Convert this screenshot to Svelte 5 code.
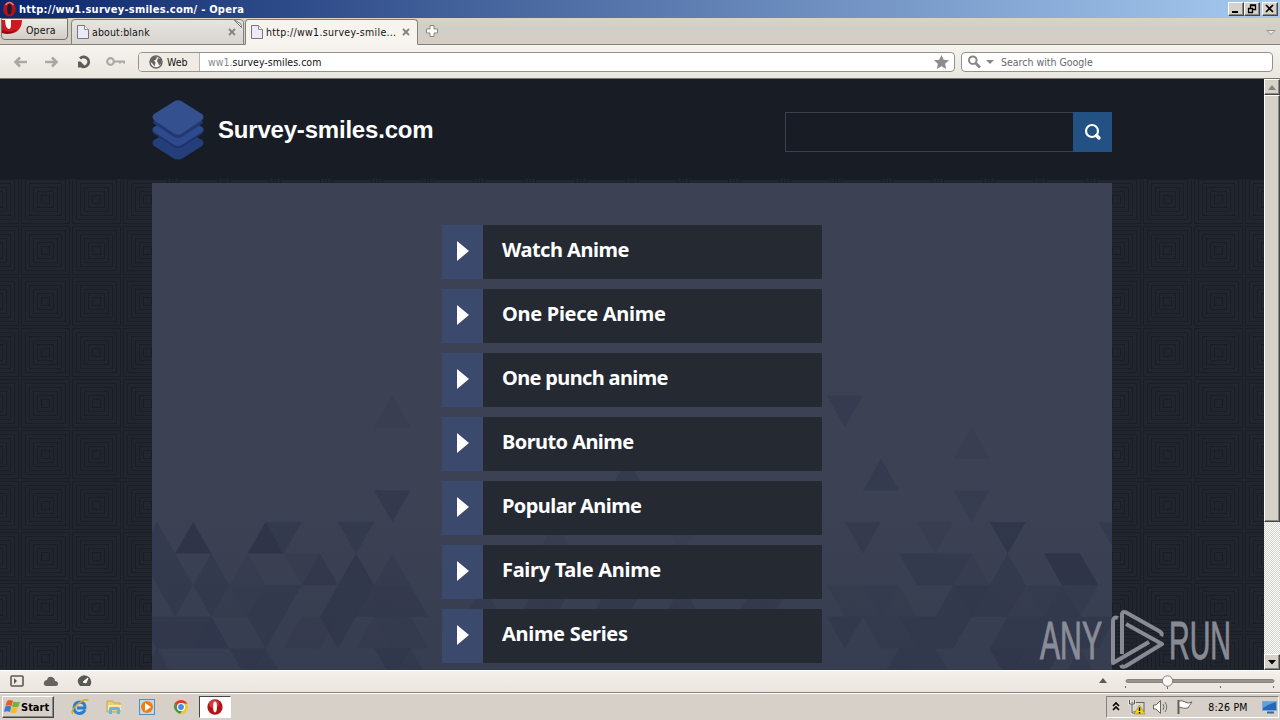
<script lang="ts">
    const links = [
        { label: 'Watch Anime', spacing: -0.5 },
        { label: 'One Piece Anime', spacing: -0.3 },
        { label: 'One punch anime', spacing: -0.65 },
        { label: 'Boruto Anime', spacing: -0.57 },
        { label: 'Popular Anime', spacing: -0.57 },
        { label: 'Fairy Tale Anime', spacing: -0.3 },
        { label: 'Anime Series', spacing: -0.3 }
    ];

    // column, row, direction, opacity
    const triangles: [number, number, string, number][] = [
        [13, -4, 'up', 0.25], [38, -4, 'down', 0.4], [45, -3, 'up', 0.25], [40, -2, 'up', 0.5],
        [26, -2, 'up', 0.5], [13, -1, 'down', 0.55], [45, -1, 'down', 0.3],
        [0, 0, 'up', 0.4], [2, 0, 'up', 0.85], [6, 0, 'up', 0.85], [7, 0, 'down', 0.5],
        [11, 0, 'down', 0.5], [39, 0, 'down', 0.45], [43, 0, 'down', 0.2], [47, 0, 'down', 0.7],
        [53, 0, 'down', 0.4], [22, 0, 'up', 0.2], [29, 0, 'down', 0.15],
        [0, 1, 'down', 0.4], [1, 1, 'up', 0.45], [3, 1, 'up', 0.5], [5, 1, 'up', 0.25],
        [8, 1, 'down', 0.2], [9, 1, 'up', 0.6], [11, 1, 'up', 0.65], [13, 1, 'up', 0.3],
        [26, 1, 'up', 0.4], [31, 1, 'down', 0.3], [42, 1, 'down', 0.5], [43, 1, 'up', 0.5],
        [44, 1, 'down', 0.4], [45, 1, 'up', 0.2], [47, 1, 'up', 0.5], [50, 1, 'down', 0.85],
        [51, 1, 'up', 0.85],
        [1, 2, 'down', 0.5], [3, 2, 'down', 0.5], [4, 2, 'up', 0.25], [5, 2, 'down', 0.3],
        [6, 2, 'up', 0.5], [7, 2, 'down', 0.5], [10, 2, 'up', 0.6], [11, 2, 'down', 0.6],
        [12, 2, 'up', 0.45], [13, 2, 'down', 0.4], [14, 2, 'up', 0.4], [18, 2, 'up', 0.3],
        [21, 2, 'up', 0.4], [22, 2, 'down', 0.4], [25, 2, 'up', 0.5], [26, 2, 'down', 0.5],
        [29, 2, 'up', 0.4], [33, 2, 'up', 0.4], [34, 2, 'down', 0.4], [38, 2, 'down', 0.2],
        [39, 2, 'up', 0.2], [40, 2, 'down', 0.3], [41, 2, 'up', 0.25], [44, 2, 'up', 0.5],
        [45, 2, 'down', 0.6], [46, 2, 'up', 0.5], [47, 2, 'down', 0.45], [48, 2, 'up', 0.25],
        [49, 2, 'down', 0.3], [50, 2, 'up', 0.5], [51, 2, 'down', 0.3],
        [0, 3, 'down', 0.6], [1, 3, 'up', 0.6], [2, 3, 'down', 0.6], [3, 3, 'up', 0.7],
        [6, 3, 'down', 0.5], [8, 3, 'up', 0.25], [9, 3, 'down', 0.25], [10, 3, 'down', 0.6],
        [12, 3, 'up', 0.25], [13, 3, 'down', 0.3], [14, 3, 'up', 0.3], [38, 3, 'down', 0.45],
        [40, 3, 'down', 0.3], [41, 3, 'up', 0.35], [42, 3, 'down', 0.5], [43, 3, 'up', 0.5],
        [44, 3, 'down', 0.45], [47, 3, 'up', 0.4], [48, 3, 'down', 0.4], [49, 3, 'up', 0.4],
        [50, 3, 'down', 0.4], [51, 3, 'up', 0.4], [52, 3, 'down', 0.4],
        [0, 4, 'up', 0.4], [5, 4, 'down', 0.6], [6, 4, 'up', 0.5], [13, 4, 'down', 0.55],
        [14, 4, 'up', 0.3], [41, 4, 'up', 0.5], [42, 4, 'down', 0.4], [43, 4, 'up', 0.4],
        [47, 4, 'down', 0.65], [48, 4, 'up', 0.6], [49, 4, 'down', 0.6], [51, 4, 'up', 0.3]
    ];

    function points(col: number, row: number, dir: string) {
        const x = 5 + col * 18.1;
        const top = 339 + row * 31.6;
        const bottom = top + 31.6;
        return dir === 'up'
            ? `${x},${top} ${x - 18.1},${bottom} ${x + 18.1},${bottom}`
            : `${x},${bottom} ${x - 18.1},${top} ${x + 18.1},${top}`;
    }
</script>

{#snippet operaIcon(size: number)}
    <svg width={size} height={size} viewBox="0 0 16 16">
        <ellipse cx="8" cy="8" rx="7.6" ry="7.8" fill="#b51217" />
        <ellipse cx="7" cy="5" rx="5" ry="4" fill="#ea6961" opacity=".5" />
        <ellipse cx="8" cy="8" rx="1.9" ry="5.4" fill="#fff" />
    </svg>
{/snippet}

{#snippet pageIcon()}
    <svg width="12" height="14" viewBox="0 0 12 14">
        <path d="M.5 .5H7.5L11.5 4.5V13.5H.5Z" fill="#eceaf6" stroke="#777581" />
        <path d="M7.5 .5V4.5H11.5" fill="#fff" stroke="#8d8b96" />
    </svg>
{/snippet}

{#snippet closeIcon()}
    <svg width="8" height="8" viewBox="0 0 8 8">
        <path d="M1 1L7 7M7 1L1 7" stroke="#858380" stroke-width="1.8" />
    </svg>
{/snippet}

<div class="screen">
    <header class="titlebar">
        <span class="title-icon">
            <svg width="13" height="16" viewBox="0 0 13 16">
                <ellipse cx="6.500" cy="8" rx="6.3" ry="7.6" fill="#b51116" />
                <path d="M2.500 4Q6.500 -1 10.500 4" stroke="#f17a72" stroke-width="1.5" fill="none" />
                <ellipse cx="6.500" cy="8" rx="2.3" ry="5.5" fill="#1b1c38" />
            </svg>
        </span>
        <span class="title">http://ww1.survey-smiles.com/ - Opera</span>
        <div class="window-buttons">
            <span class="window-button">
                <svg width="13" height="11"><path d="M3 9H9" stroke="#000" stroke-width="2" /></svg>
            </span>
            <span class="window-button">
                <svg width="13" height="11">
                    <path d="M5.5 5V2.5H10.5V6.5H8M5 2H11M3 5.5H8M3.5 5V9.5H7.5V5" fill="none" stroke="#000" stroke-width="1.3" />
                </svg>
            </span>
            <span class="window-button close">
                <svg width="13" height="11"><path d="M3 2L10 9M10 2L3 9" stroke="#000" stroke-width="1.7" /></svg>
            </span>
        </div>
    </header>

    <div class="tabbar">
        <div class="menu-button">
            <svg width="22" height="17" viewBox="0 0 22 17">
                <path d="M0 1H20Q20 9 14 13Q8 16 0 13Z" fill="#cf1820" />
                <path d="M0 11Q8 15 15 10Q10 17 0 14Z" fill="#94090f" />
                <path d="M3 0H9V6Q9 10 6.500 10Q4 9 3.500 5Z" fill="#fff" />
            </svg>
            <span>Opera</span>
        </div>
        <div class="tab">
            {@render pageIcon()}
            <span class="tab-title">about:blank</span>
            {@render closeIcon()}
            <svg class="tab-curl" width="8" height="8" viewBox="0 0 8 8">
                <path d="M.5 .5L7.500 7.500Q7 2 5 3Q3 .5 .5 .5Z" fill="#fff" stroke="#77736c" />
            </svg>
        </div>
        <div class="tab active">
            {@render pageIcon()}
            <span class="tab-title">http://ww1.survey-smile...</span>
            {@render closeIcon()}
        </div>
        <svg class="new-tab" width="14" height="14" viewBox="0 0 14 14">
            <path d="M5 1.500H9V5H12.500V9H9V12.500H5V9H1.500V5H5Z" fill="#fff" stroke="#8c8984" />
        </svg>
        <svg class="tab-menu" width="10" height="7" viewBox="0 0 10 7">
            <path d="M1 1.500H9L5 5.500Z" fill="#eee" stroke="#98948d" />
        </svg>
    </div>

    <div class="addressbar">
        <svg class="nav" width="114" height="16" viewBox="0 0 114 16">
            <path d="M15 8H4M8 3.500L3.500 8L8 12.500" stroke="#aaa8a4" stroke-width="2.600" fill="none" />
            <path d="M33 8H44M40 3.500L44.500 8L40 12.500" stroke="#aaa8a4" stroke-width="2.600" fill="none" />
            <path d="M68 4.500A5 5 0 1 1 70 12.600" stroke="#5d5b58" stroke-width="2.800" fill="none" />
            <path d="M66 13.500V7.500H68.500L72 11V13.500Z" fill="#5d5b58" />
            <circle cx="98.500" cy="7.500" r="3.300" fill="none" stroke="#aaa8a4" stroke-width="2.200" />
            <path d="M102 6.500H113V9.500H111V8.500H109V9.500H107V8.500H102Z" fill="#aaa8a4" />
        </svg>
        <div class="url-field">
            <div class="site-type">
                <svg width="14" height="14" viewBox="0 0 14 14">
                    <circle cx="7" cy="7" r="6" fill="#f4f3f1" stroke="#666461" stroke-width="1.500" />
                    <path d="M2 4L5 1.500L8 2L7 4.500L5 5.500L6.500 7.500L5.500 11.500L3.500 8.500L1.500 7ZM9 3L12 4L12.500 8L10.500 10.500L9 8L8 6Z" fill="#666461" />
                </svg>
                <span>Web</span>
            </div>
            <span class="url"><i>ww1.</i>survey-smiles.com</span>
            <svg class="star" width="15" height="14" viewBox="0 0 15 14">
                <path d="M7.500 0L9.700 4.700L15 5.300L11.100 8.700L12.200 14L7.500 11.300L2.800 14L3.900 8.700L0 5.300L5.300 4.700Z" fill="#8d8b8b" />
            </svg>
        </div>
        <div class="search-field">
            <svg width="26" height="14" viewBox="0 0 26 14">
                <circle cx="4.800" cy="5.200" r="3.800" fill="none" stroke="#888685" stroke-width="2" />
                <path d="M7.500 8L12 12.500" stroke="#888685" stroke-width="2.600" />
                <path d="M18 5H26L22 9Z" fill="#888685" />
            </svg>
            <span>Search with Google</span>
        </div>
    </div>

    <div class="viewport">
        <main class="page">
            <svg class="backdrop" width="1264" height="491">
                <defs>
                    <pattern id="squares" width="51" height="51" patternUnits="userSpaceOnUse" x="20" y="-5">
                        <rect width="51" height="51" fill="#21262e" />
                        <g fill="none" stroke="#1a1f27">
                            <rect x="1.500" y="1.500" width="48" height="48" />
                            <rect x="5.500" y="5.500" width="40" height="40" />
                            <rect x="9.500" y="9.500" width="32" height="32" />
                            <rect x="13.500" y="13.500" width="24" height="24" />
                            <rect x="17.500" y="17.500" width="16" height="16" />
                            <rect x="21.500" y="21.500" width="8" height="8" />
                        </g>
                    </pattern>
                </defs>
                <rect width="1264" height="491" fill="url(#squares)" />
            </svg>
            <div class="site-header">
                <div class="site-inner">
                    <svg class="logo" width="52" height="60" viewBox="0 0 52 60">
                        <path d="M2 40L23 28Q26 26 29 28L50 40Q53 43 50 46L31 58Q26 61 21 58L2 46Q-1 43 2 40Z" fill="#243e7c" />
                        <path d="M2 29L23 17H29L50 29Q53 31 50 34L30 47Q26 49 22 47L2 34Q-1 31 2 29Z" fill="#1d3164" />
                        <path d="M2 27L23 15H29L50 27Q53 29 50 32L30 45Q26 47 22 45L2 32Q-1 29 2 27Z" fill="#2d4a8d" />
                        <path d="M2 20L23 8H29L50 20L51 23L30 37Q26 39 22 37L1 23Z" fill="#22386f" />
                        <path d="M2 14L22 1.500Q26 -1 30 1.500L50 14Q53 17 50 20L30 33.500Q26 36 22 33.500L2 20Q-1 17 2 14Z" fill="#35508f" />
                    </svg>
                    <h1>Survey-smiles.com</h1>
                    <div class="site-search">
                        <div class="site-input"></div>
                        <div class="site-submit">
                            <svg width="18" height="18" viewBox="0 0 18 18">
                                <circle cx="8" cy="8" r="6" fill="none" stroke="#fff" stroke-width="2.200" />
                                <path d="M12.500 12.500L15 15" stroke="#fff" stroke-width="3.400" stroke-linecap="round" />
                            </svg>
                        </div>
                    </div>
                </div>
            </div>
            <div class="content">
                <svg class="mosaic" width="960" height="487">
                    <defs>
                        <linearGradient id="shade" x2="0" y2="1">
                            <stop offset=".65" stop-color="#30384b" stop-opacity="0" />
                            <stop offset="1" stop-color="#30384b" stop-opacity=".45" />
                        </linearGradient>
                    </defs>
                    <rect width="960" height="487" fill="url(#shade)" />
                    {#each triangles as [col, row, dir, opacity]}
                        <polygon points={points(col, row, dir)} fill="#2e3348" {opacity} />
                    {/each}
                </svg>
                <div class="links">
                    {#each links as link}
                        <div class="link">
                            <div class="arrow">
                                <svg width="12" height="20"><path d="M0 0L12 10L0 20Z" fill="#fff" /></svg>
                            </div>
                            <span class="link-label" style="letter-spacing: {link.spacing}px">{link.label}</span>
                        </div>
                    {/each}
                </div>
            </div>
        </main>
        <div class="scrollbar">
            <div class="scroll-button"><svg width="8" height="5"><path d="M0 5L4 0L8 5Z" fill="#85827c" /></svg></div>
            <div class="scroll-thumb"></div>
            <div class="scroll-button down"><svg width="8" height="5"><path d="M0 0L4 4.500L8 0Z" fill="#000" /></svg></div>
        </div>
        <svg class="watermark" width="220" height="64" viewBox="0 0 220 64">
            <g class="watermark-text">
                <text x="5" y="51" textLength="62" lengthAdjust="spacingAndGlyphs">ANY</text>
                <text x="134" y="51" textLength="62" lengthAdjust="spacingAndGlyphs">RUN</text>
            </g>
            <g fill="none" stroke="#9a9ca6" stroke-width="4" stroke-linejoin="round" opacity=".85">
                <path d="M83 10Q78 8 78 14V55L114 34" />
                <path d="M87 46V7Q87 2 92 5L124 23Q128 25 126 28" />
                <path d="M91 16L127 36L91 58Q87 60 86 57" />
            </g>
        </svg>
    </div>

    <div class="statusbar">
        <svg width="90" height="14" viewBox="0 0 90 14">
            <rect x="1" y="2" width="12" height="10" rx="1" fill="none" stroke="#5b5955" stroke-width="1.600" />
            <path d="M4 4L7 7L4 10Z" fill="#5b5955" />
            <path d="M36 12Q33 11 34 8Q35 6 37 6Q38 2 42 3Q45 4 45 7Q48 7 48 10Q48 12 46 12Z" fill="#65625f" />
            <path d="M70 12Q66 7 69 4Q73 -1 79 3Q83 7 80 12Z" fill="#5b5955" />
            <path d="M73 8L78 4L76 9Z" fill="#fff" stroke="#fff" />
        </svg>
        <svg class="zoom" width="180" height="20" viewBox="0 0 180 20">
            <path d="M0 12L4 7L8 12Z" fill="#5b5955" />
            <rect x="27" y="8.500" width="148" height="3" rx="1.500" fill="#97938d" stroke="#77736d" stroke-width=".8" />
            <path d="M26.500 15V17M68.500 15V18M121.500 15V17M174.500 15V17" stroke="#6c6964" />
            <circle cx="68.500" cy="10" r="5.200" fill="#faf8f6" stroke="#85817b" />
        </svg>
    </div>

    <footer class="taskbar">
        <div class="start">
            <svg width="17" height="16" viewBox="0 0 17 16">
                <path d="M3 2Q6 0 9 2L7.500 7Q4.500 5.500 1.500 7Z" fill="#e95b25" />
                <path d="M9.500 2.500Q13 4 16 2.500L14.500 7.500Q11.500 9 8 7.500Z" fill="#70b337" />
                <path d="M1.300 7.500Q4.300 6 7.300 7.500L6 13Q3 11.500 0 13Z" fill="#3c7bcb" />
                <path d="M7.900 8Q11 9.500 14 8L12.500 13.500Q9.500 15 6.500 13.500Z" fill="#f3bd27" />
            </svg>
            <span>Start</span>
        </div>
        <div class="quick-launch">
            <svg width="18" height="18" viewBox="0 0 18 18">
                <path d="M14 12Q12 15.500 8.500 15.500Q3 15 3 9.500Q3.500 4 9 4Q14.500 4.500 14 10H6" fill="none" stroke="#247fd1" stroke-width="2.800" />
                <path d="M2 16Q-1 13 7 6Q16 -1 17 3" fill="none" stroke="#e0a91e" stroke-width="1.500" />
            </svg>
            <svg width="18" height="18" viewBox="0 0 18 18">
                <path d="M2 3H8L9 5H15V14H2Z" fill="#edcf72" stroke="#c9a551" />
                <path d="M3 7H16V12H3Z" fill="#fae9a3" />
                <path d="M4 16V11Q4 9 6 9H13Q15 9 15 11V16H12V12H7V16Z" fill="#67b4dc" />
            </svg>
            <svg width="18" height="18" viewBox="0 0 18 18">
                <rect x="1.500" y="1.500" width="15" height="15" fill="#bcdcf3" stroke="#508fc5" />
                <circle cx="9" cy="9" r="6" fill="#f07c12" />
                <path d="M7 5L13 9L7 13Z" fill="#fff" />
            </svg>
            <svg width="18" height="18" viewBox="0 0 18 18">
                <circle cx="9" cy="9" r="7" fill="#f3c629" />
                <path d="M2.500 5.500Q5 2 9 2Q13 2 15.500 5.500H9L6 10Z" fill="#dd3b2e" />
                <path d="M2.500 5.500Q0 12 8 16L10.500 12L6 10Z" fill="#399b4d" />
                <circle cx="9" cy="9" r="3.500" fill="#458bea" stroke="#fff" stroke-width="1.200" />
            </svg>
        </div>
        <div class="task">{@render operaIcon(16)}</div>
        <div class="tray">
            <svg width="82" height="18" viewBox="0 0 82 18">
                <path d="M1 8L4 5L7 8M1 12L4 9L7 12" fill="none" stroke="#000" stroke-width="1.600" />
                <rect x="20" y="4.500" width="12" height="9" fill="#dad7d0" stroke="#66635e" />
                <path d="M17.500 2V6H22.500V2M20 6V15H24" fill="none" stroke="#eee" stroke-width="2.500" />
                <path d="M17.500 2V6H22.500V2M20 6V15H24" fill="none" stroke="#555" stroke-width="1" />
                <path d="M27.500 7L33 16H22Z" fill="#f5d51c" stroke="#a98d14" stroke-width=".7" />
                <path d="M27.500 9.500V13M27.500 14V15.500" stroke="#000" stroke-width="1.400" />
                <path d="M41.500 7H44L48.500 2.500V15.500L44 11H41.500Z" fill="#fff" stroke="#696763" />
                <path d="M51 6Q53 9 51 12M53 4Q56.500 9 53 14" fill="none" stroke="#73716d" />
                <path d="M66.500 2V16" stroke="#5f5d59" stroke-width="2" />
                <path d="M67 3Q70 2 73 4Q76 6 80 4Q77 8 76 10Q72 11 67 9Z" fill="#fff" stroke="#696763" />
            </svg>
            <time>8:26 PM</time>
            <svg width="15" height="14" viewBox="0 0 15 14">
                <rect x=".5" y="1.500" width="14" height="9" fill="#2468b8" stroke="#79a9d8" />
                <path d="M1 2H14Q7 4 1 8Z" fill="#5f9fde" />
                <path d="M5 12.500H12" stroke="#3d658f" stroke-width="2" />
            </svg>
        </div>
    </footer>
</div>

<style>
    :global(body) {
        margin: 0;
        overflow: hidden;
    }

    .screen {
        width: 1280px;
        height: 720px;
        display: flex;
        flex-direction: column;
        overflow: hidden;
        background: #d6d0c8;
        color: #111;
        font-family: "DejaVu Sans Condensed", "DejaVu Sans", sans-serif;
        font-size: 10.5px;
        white-space: nowrap;
    }

    svg {
        display: block;
        flex-shrink: 0;
    }

    .titlebar {
        height: 18px;
        display: flex;
        align-items: center;
        background: linear-gradient(90deg, #0b266b, #a6caf0);
    }

    .title-icon {
        padding: 0 3px 0 3px;
    }

    .title {
        flex: 1;
        color: #fff;
        font-size: 11px;
        font-weight: bold;
        letter-spacing: 0.25px;
    }

    .window-buttons {
        display: flex;
        padding-right: 2px;
    }

    .window-button,
    .scroll-button,
    .scroll-thumb {
        box-sizing: border-box;
        background: #d6d2ca;
        border: 1px solid;
        border-color: #fff #484642 #484642 #fff;
        box-shadow: inset -1px -1px #8b8882;
    }

    .window-button {
        width: 16px;
        height: 14px;
    }

    .window-button.close {
        margin-left: 2px;
    }

    .tabbar {
        box-sizing: border-box;
        height: 27px;
        display: flex;
        align-items: flex-start;
        border-bottom: 1px solid #85817a;
        background: linear-gradient(#dfd1c6, #cfcfc8 35%, #d5cec5);
    }

    .menu-button {
        box-sizing: border-box;
        width: 67px;
        height: 22px;
        margin-left: 1px;
        border: 1px solid #77736c;
        border-radius: 0 0 4px 4px;
        display: flex;
        gap: 2px;
        background: linear-gradient(#eeeae6, #d2cec7);
    }

    .menu-button span {
        line-height: 22px;
        letter-spacing: 0.15px;
    }

    .tab {
        box-sizing: border-box;
        position: relative;
        width: 173px;
        height: 26px;
        margin: 1px 0 0 3px;
        padding: 0 7px 0 5px;
        display: flex;
        align-items: center;
        border: 1px solid #85817a;
        border-radius: 4px 4px 0 0;
        background: linear-gradient(#e7e4e0, #d8d5d0);
    }

    .tab-title {
        flex: 1;
        margin-left: 3px;
        letter-spacing: 0.13px;
    }

    .tab.active .tab-title {
        letter-spacing: 0.3px;
    }

    .tab-curl {
        position: absolute;
        right: 1px;
        top: 0;
    }

    .tab.active {
        margin-left: 1px;
        border-bottom-color: #f5f2ed;
        background: #f7f4ef;
    }

    .new-tab {
        margin: 6px 0 0 7px;
    }

    .tab-menu {
        margin: 11px 4px 0 auto;
    }

    .addressbar {
        box-sizing: border-box;
        height: 34px;
        display: flex;
        align-items: center;
        padding: 0 7px 0 12px;
        border-bottom: 1px solid #77746e;
        background: linear-gradient(#f7f4ef, #e9e5df);
    }

    .url-field,
    .search-field {
        box-sizing: border-box;
        height: 20px;
        display: flex;
        align-items: center;
        border: 1px solid #96928b;
        border-radius: 4px;
        background: #fff;
    }

    .url-field {
        width: 817px;
        margin: 0 6px 0 12px;
        overflow: hidden;
    }

    .site-type {
        box-sizing: border-box;
        width: 61px;
        height: 18px;
        display: flex;
        align-items: center;
        gap: 4px;
        padding-left: 10px;
        border-right: 1px solid #b7b3ab;
        background: #f0ece5;
    }

    .url {
        flex: 1;
        padding-left: 8px;
        letter-spacing: 0.03px;
    }

    .url i {
        color: #888;
        font-style: normal;
    }

    .star {
        margin-right: 5px;
    }

    .search-field {
        flex: 1;
        gap: 7px;
        padding-left: 6px;
        color: #696969;
    }

    .viewport {
        position: relative;
        height: 591px;
        display: flex;
    }

    .page {
        position: relative;
        width: 1264px;
        height: 591px;
        overflow: hidden;
        background: #20262f;
    }

    .backdrop {
        position: absolute;
        left: 0;
        top: 100px;
    }

    .site-header {
        height: 100px;
        background: #181c24;
    }

    .site-inner {
        width: 960px;
        height: 102px;
        margin: 0 auto;
        display: flex;
        align-items: center;
    }

    h1 {
        margin: 0 auto 0 14px;
        color: #fff;
        font: bold 24px/30px "Liberation Sans", Arial, sans-serif;
        letter-spacing: -0.2px;
    }

    .site-search {
        width: 327px;
        height: 40px;
        margin-top: 4px;
        display: flex;
    }

    .site-input {
        flex: 1;
        border: 1px solid #3b404d;
        border-right: 0;
        background: #171c25;
    }

    .site-submit {
        width: 39px;
        display: flex;
        align-items: center;
        justify-content: center;
        background: #235184;
    }

    .content {
        position: relative;
        width: 960px;
        height: 487px;
        margin: 4px auto 0;
        background: #3c4254;
    }

    .mosaic {
        position: absolute;
        left: 0;
        top: 0;
    }

    .links {
        position: relative;
        width: 380px;
        margin-left: 290px;
        padding-top: 42px;
        display: flex;
        flex-direction: column;
        gap: 10px;
    }

    .link {
        height: 54px;
        display: flex;
        background: #242932;
    }

    .arrow {
        width: 41px;
        padding: 16px 0 0 15px;
        box-sizing: border-box;
        background: #3b496d;
    }

    .link-label {
        margin-left: 19px;
        color: #fff;
        font: bold 20px/50px "Noto Sans", "Open Sans", sans-serif;
    }

    .scrollbar {
        width: 16px;
        display: flex;
        flex-direction: column;
        background: repeating-conic-gradient(#fff 0 25%, #d6d2ca 0 50%) 0 0 / 2px 2px;
    }

    .scroll-button {
        height: 16px;
        display: flex;
        align-items: center;
        justify-content: center;
    }

    .scroll-thumb {
        height: 427px;
    }

    .scroll-button.down {
        margin-top: auto;
    }

    .watermark {
        position: absolute;
        left: 1035px;
        top: 529px;
        overflow: visible;
    }

    .watermark-text {
        fill: #9a9ca6;
        stroke: #9a9ca6;
        stroke-width: 1px;
        opacity: 0.85;
        font: 53px "Liberation Sans", sans-serif;
    }

    .statusbar {
        box-sizing: border-box;
        height: 23px;
        padding: 0 4px 2px 10px;
        display: flex;
        align-items: center;
        justify-content: space-between;
        border-top: 1px solid #fff;
        border-bottom: 1px solid #85817a;
        background: linear-gradient(#f5f0eb, #e9e4dc);
    }

    .zoom {
        margin-right: -3px;
    }

    .taskbar {
        box-sizing: border-box;
        height: 27px;
        padding: 2px 0 0 2px;
        display: flex;
        border-top: 1px solid #fff;
        background: #d6d0c8;
    }

    .start {
        box-sizing: border-box;
        width: 52px;
        height: 22px;
        padding-left: 1px;
        display: flex;
        align-items: center;
        border: 1px solid;
        border-color: #fff #484642 #484642 #fff;
        box-shadow: inset -1px -1px #8b8882;
        color: #000;
        font-size: 11px;
        font-weight: bold;
    }

    .quick-launch {
        display: flex;
        gap: 15.5px;
        padding: 2px 0 0 17px;
    }

    .task {
        box-sizing: border-box;
        width: 32px;
        height: 22px;
        margin-left: 9px;
        display: flex;
        align-items: center;
        justify-content: center;
        border: 1px solid;
        border-color: #484642 #fff #fff #484642;
        background: #fff;
    }

    .tray {
        box-sizing: border-box;
        width: 173px;
        height: 22px;
        margin: 0 1px 0 auto;
        padding: 0 1px 0 5px;
        display: flex;
        align-items: center;
        justify-content: space-between;
        border: 1px solid;
        border-color: #85817a #fff #fff #85817a;
        color: #000;
    }

    .tray time {
        letter-spacing: 0.2px;
    }
</style>
